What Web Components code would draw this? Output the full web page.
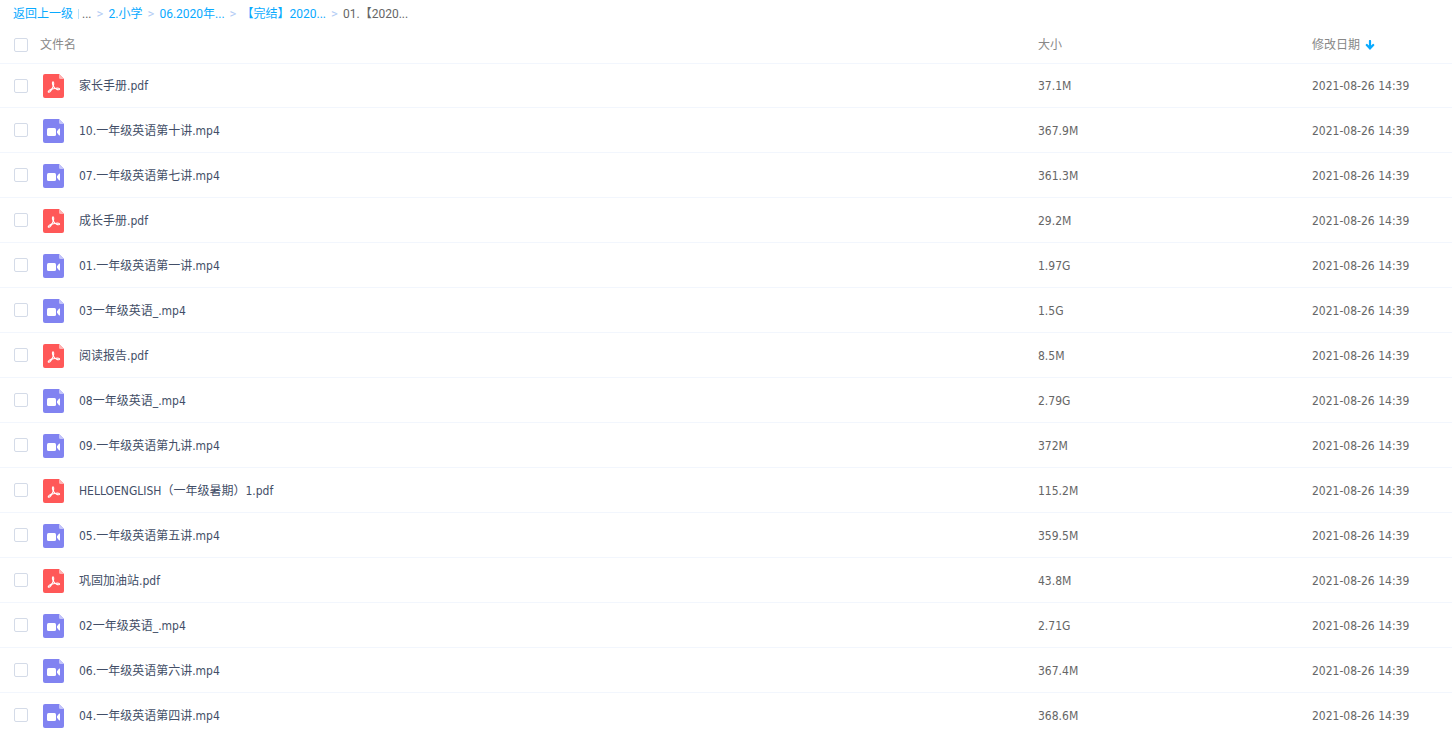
<!DOCTYPE html>
<html lang="zh-CN">
<head>
<meta charset="utf-8">
<title>文件列表</title>
<style>
  html {
    scrollbar-width: none;
  }

  body {
    margin: 0;
    background: #fff;
    color: #424e67;
    font: 12px/16px "DejaVu Sans Condensed", "Noto Sans CJK SC", sans-serif;
  }
</style>
</head>
<body>
<file-browser>
  <path-trail slot="path"></path-trail>
  <file-table></file-table>
</file-browser>

<script>
const browserTemplate = document.createElement("template");
browserTemplate.innerHTML = `
  <style>
    :host {
      display: flex;
      flex-direction: column;
    }
  </style>
  <slot name="path"></slot>
  <slot></slot>
`;

class FileBrowser extends HTMLElement {
  constructor() {
    super();
    this.attachShadow({ mode: "open" });
    this.shadowRoot.appendChild(browserTemplate.content.cloneNode(true));
  }
}

const trailTemplate = document.createElement("template");
trailTemplate.innerHTML = `
  <style>
    :host {
      display: block;
      font-family: Roboto, "Noto Sans CJK SC", sans-serif;
    }

    nav {
      display: flex;
      align-items: center;
      gap: 5px;
      height: 27px;
      padding: 1px 13px 0;
      box-sizing: border-box;
      white-space: nowrap;
    }

    a {
      color: #09aaff;
      text-decoration: none;
    }

    .sep {
      width: 7px;
      color: #b4cdf5;
      font-size: 13px;
    }

    .bar {
      width: 1px;
      height: 10px;
      margin-right: -2px;
      background: #b8e2fb;
    }

    .more,
    .current {
      color: #666;
    }
  </style>
  <nav aria-label="路径">
    <a href="#up">返回上一级</a>
    <span class="bar"></span>
    <span class="more">...</span>
    <span class="sep">&gt;</span>
    <a href="#2">2.小学</a>
    <span class="sep">&gt;</span>
    <a href="#06">06.2020年...</a>
    <span class="sep">&gt;</span>
    <a href="#done">【完结】2020...</a>
    <span class="sep">&gt;</span>
    <span class="current" aria-current="page">01.【2020...</span>
  </nav>
`;

class PathTrail extends HTMLElement {
  constructor() {
    super();
    this.attachShadow({ mode: "open" });
    this.shadowRoot.appendChild(trailTemplate.content.cloneNode(true));
  }
}

const ICONS = {
  pdf: `
    <path fill="#ff5858" d="M2 0h14l5 5v17a2 2 0 0 1-2 2H2a2 2 0 0 1-2-2V2a2 2 0 0 1 2-2z"/>
    <path fill="#ffb3b3" d="M16 0l5 5h-3.500a1.500 1.500 0 0 1-1.500-1.500z"/>
    <g fill="none" stroke="#fff" stroke-width="1.100" stroke-linecap="round" stroke-linejoin="round">
      <path d="M10 11.500C9.200 9.800 9.200 7.800 10 7.800s1 2 .3 4.200C9.300 14.500 7.500 18 6 18.300c-1.600 0-.7-1.900 2.200-3"/>
      <path d="M10.300 12c.7 1.400 1.800 2.500 3.200 3.200 1.500.7 3 .7 3.100-.1s-1.600-1.200-3.600-.9c-1.800.2-3.400.6-4.800 1.100"/>
    </g>`,
  video: `
    <path fill="#8183f1" d="M2 0h14l5 5v17a2 2 0 0 1-2 2H2a2 2 0 0 1-2-2V2a2 2 0 0 1 2-2z"/>
    <path fill="#c3c4f9" d="M16 0l5 5h-3.500a1.500 1.500 0 0 1-1.500-1.500z"/>
    <rect x="4" y="9" width="9" height="8" rx="1.500" fill="#fff"/>
    <path fill="#fff" d="M14 12.200l2.200-2.600c.3-.4.8-.2.8.3v6.200c0 .5-.5.700-.8.300L14 13.800z"/>`
};

class FileIcon extends HTMLElement {
  constructor() {
    super();
    this.attachShadow({ mode: "open" });
  }

  connectedCallback() {
    const type = this.getAttribute("type");
    this.shadowRoot.innerHTML = `
      <style>
        :host {
          display: block;
          flex: none;
          width: 21px;
          height: 24px;
        }

        svg {
          display: block;
        }
      </style>
      <svg width="21" height="24" viewBox="0 0 21 24" aria-hidden="true">${ICONS[type]}</svg>
    `;
  }
}

const MODIFIED = "2021-08-26 14:39";

const FILES = [
  ["家长手册.pdf", "37.1M"],
  ["10.一年级英语第十讲.mp4", "367.9M"],
  ["07.一年级英语第七讲.mp4", "361.3M"],
  ["成长手册.pdf", "29.2M"],
  ["01.一年级英语第一讲.mp4", "1.97G"],
  ["03一年级英语_.mp4", "1.5G"],
  ["阅读报告.pdf", "8.5M"],
  ["08一年级英语_.mp4", "2.79G"],
  ["09.一年级英语第九讲.mp4", "372M"],
  ["HELLOENGLISH（一年级暑期）1.pdf", "115.2M"],
  ["05.一年级英语第五讲.mp4", "359.5M"],
  ["巩固加油站.pdf", "43.8M"],
  ["02一年级英语_.mp4", "2.71G"],
  ["06.一年级英语第六讲.mp4", "367.4M"],
  ["04.一年级英语第四讲.mp4", "368.6M"]
];

const tableTemplate = document.createElement("template");
tableTemplate.innerHTML = `
  <style>
    :host {
      display: block;
    }

    table {
      width: 100%;
      table-layout: fixed;
      border-collapse: separate;
      border-spacing: 0;
    }

    th,
    td {
      box-sizing: border-box;
      padding: 0;
      text-align: left;
      vertical-align: middle;
    }

    th {
      height: 36px;
      color: #888;
      font-weight: normal;
    }

    td {
      height: 45px;
      border-bottom: 1px solid #f2f6fd;
      color: #666;
    }

    td + td {
      padding-top: 1px;
    }

    tbody tr:first-child td {
      border-top: 1px solid #f2f6fd;
    }

    .size {
      width: 274px;
    }

    .date {
      width: 140px;
    }

    .cell {
      display: flex;
      align-items: center;
      padding-left: 14px;
    }

    .cell label {
      white-space: nowrap;
    }

    td .cell label {
      padding-top: 1px;
      color: #424e67;
    }

    file-icon {
      margin: 1px 15px 0 15px;
    }

    th .cell {
      gap: 12px;
    }

    input {
      appearance: none;
      flex: none;
      width: 14px;
      height: 14px;
      margin: 0;
      border: 1px solid #d4dbe8;
      border-radius: 2px;
      background: #fff;
    }

    input:checked {
      border-color: #09aaff;
      background: #09aaff;
    }

    button {
      display: flex;
      align-items: center;
      gap: 5px;
      padding: 0;
      border: 0;
      background: none;
      color: inherit;
      font: inherit;
      cursor: pointer;
    }
  </style>
  <table>
    <thead>
      <tr>
        <th scope="col">
          <div class="cell"><input type="checkbox" id="all"><label for="all">文件名</label></div>
        </th>
        <th scope="col" class="size">大小</th>
        <th scope="col" class="date" aria-sort="descending">
          <button type="button">修改日期
            <svg width="10" height="10" viewBox="0 0 10 10" aria-hidden="true">
              <path d="M5 1v7M1.800 5L5 8.300 8.200 5" fill="none" stroke="#09aaff" stroke-width="2.200" stroke-linecap="round"/>
            </svg>
          </button>
        </th>
      </tr>
    </thead>
    <tbody></tbody>
  </table>
`;

class FileTable extends HTMLElement {
  constructor() {
    super();
    this.attachShadow({ mode: "open" });
    this.shadowRoot.appendChild(tableTemplate.content.cloneNode(true));

    this._bodyEl = this.shadowRoot.querySelector("tbody");
    this._allEl = this.shadowRoot.querySelector("#all");
    this._handleAllChange = this._handleAllChange.bind(this);
  }

  connectedCallback() {
    this._allEl.addEventListener("change", this._handleAllChange);
    this._render();
  }

  disconnectedCallback() {
    this._allEl.removeEventListener("change", this._handleAllChange);
  }

  _handleAllChange() {
    this._bodyEl.querySelectorAll("input").forEach((input) => {
      input.checked = this._allEl.checked;
    });
  }

  _render() {
    this._bodyEl.innerHTML = FILES.map(([name, size], i) => `
      <tr>
        <td>
          <div class="cell">
            <input type="checkbox" id="file-${i}">
            <file-icon type="${name.endsWith(".pdf") ? "pdf" : "video"}"></file-icon>
            <label for="file-${i}">${name}</label>
          </div>
        </td>
        <td>${size}</td>
        <td>${MODIFIED}</td>
      </tr>
    `).join("");
  }
}

customElements.define("file-browser", FileBrowser);
customElements.define("path-trail", PathTrail);
customElements.define("file-icon", FileIcon);
customElements.define("file-table", FileTable);
</script>
</body>
</html>
